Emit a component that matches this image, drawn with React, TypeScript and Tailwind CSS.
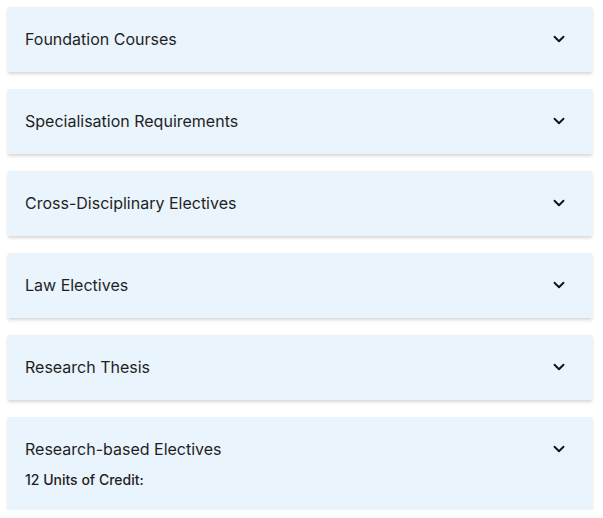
import { ChevronDown } from "lucide-react";

const SECTIONS = [
  { title: "Foundation Courses" },
  { title: "Specialisation Requirements" },
  { title: "Cross-Disciplinary Electives" },
  { title: "Law Electives" },
  { title: "Research Thesis" },
  { title: "Research-based Electives", note: "12 Units of Credit:" },
];

export default function App() {
  return (
    <div className="flex flex-col gap-[17px] bg-white px-2 pt-[7px] font-['Inter',sans-serif] text-[#1f1f1f]">
      {SECTIONS.map((s) => (
        <section
          key={s.title}
          className="w-[584px] bg-[#eaf4fc] shadow-[0_2px_3px_rgba(0,0,0,0.16)]"
        >
          <div className="flex h-[65px] items-center justify-between pb-[1px] pl-[17px] pr-[24px]">
            <span className="text-[16px]">{s.title}</span>
            <ChevronDown size={18} strokeWidth={2.5} className="text-[#111]" />
          </div>
          {s.note && (
            <p className="-mt-[13px] pb-[20px] pl-[17px] text-[14px] font-medium">{s.note}</p>
          )}
        </section>
      ))}
    </div>
  );
}
